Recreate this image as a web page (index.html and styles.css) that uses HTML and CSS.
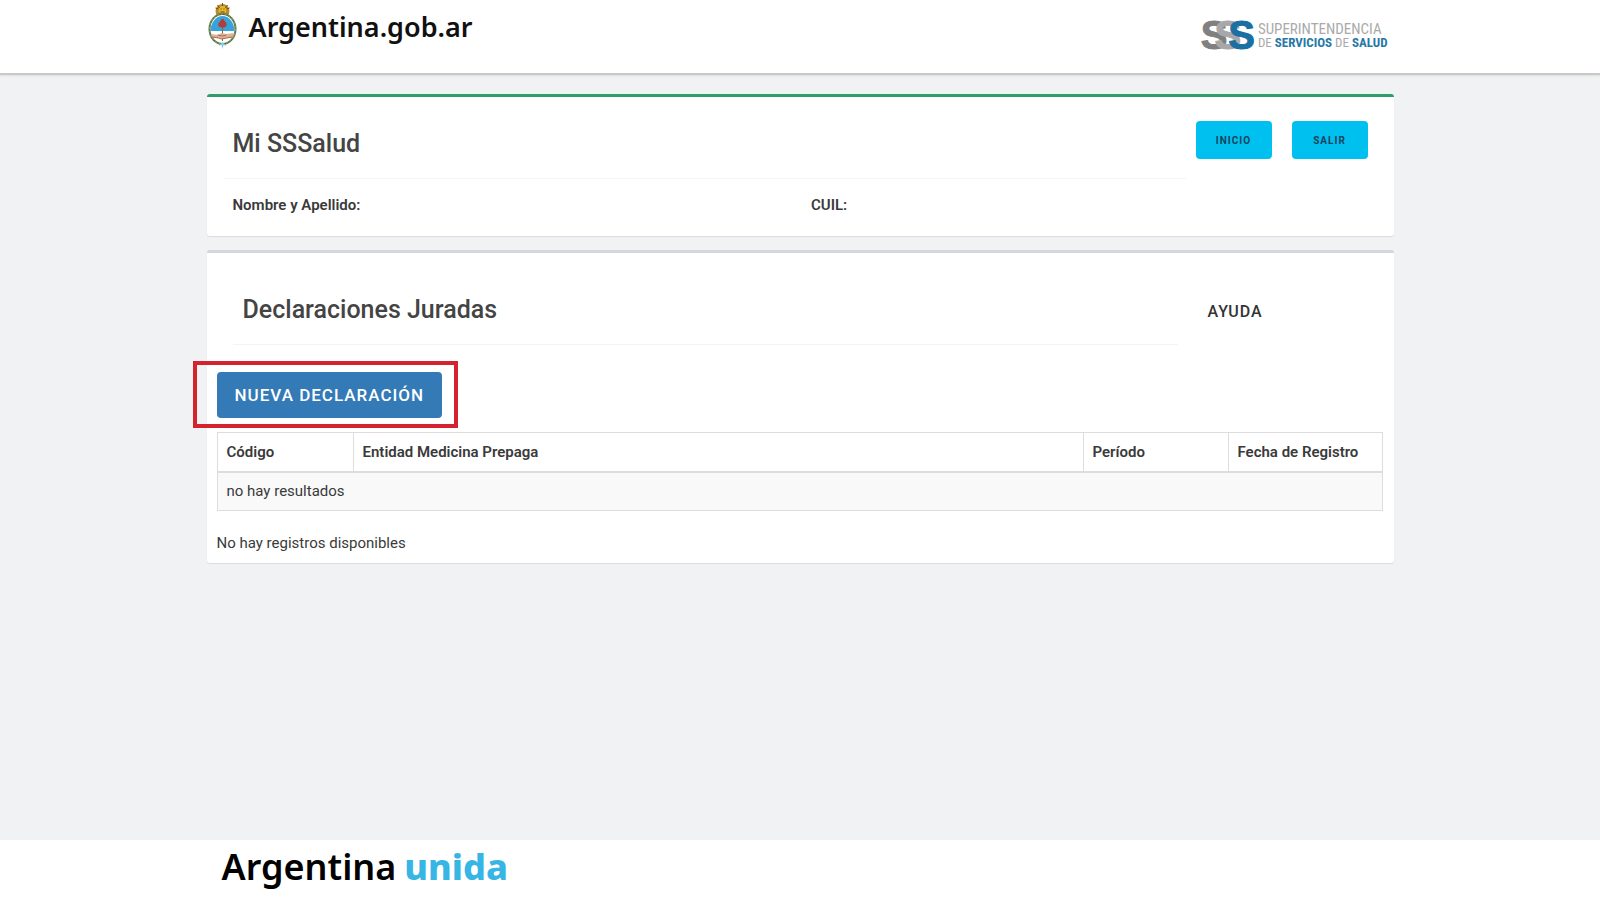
FILE: index.html
```html
<!DOCTYPE html>
<html lang="es">
<head>
<meta charset="utf-8">
<title>Mi SSSalud</title>
<link rel="stylesheet" href="styles.css">
</head>
<body>
<header class="header">
  <div class="container header-inner">
    <a class="brand" href="#">
      <svg class="crest" viewBox="0 0 30 46" aria-hidden="true">
        <circle cx="15" cy="8" r="7" fill="#b98a25"/>
        <circle cx="15" cy="7" r="4" fill="#e6b62f"/>
        <path d="M8 5l3 1M10 2l2 3M15 0v3M20 2l-2 3M22 5l-3 1" stroke="#66511f" stroke-width="1"/>
        <path d="M13 6h1M16 6h1M13 9h4" stroke="#6b4310" stroke-width="1"/>
        <ellipse cx="15" cy="26" rx="14" ry="16" fill="#54734a"/>
        <ellipse cx="15" cy="26" rx="13" ry="15" fill="none" stroke="#a89c5b" stroke-width="1" stroke-dasharray="2 2"/>
        <ellipse cx="15" cy="26" rx="12" ry="14" fill="#fff"/>
        <path d="M3 28a12 15 0 0 1 24 0z" fill="#36a4da"/>
        <path d="M15 22v16" stroke="#8b6542" stroke-width="1"/>
        <path d="M11 23c-1-4 2-4 3-7h2c1 3 4 3 3 7-2 2-6 2-8 0z" fill="#b53d39"/>
        <path d="M4 31l6 1 4-2 5 1 7-1v4l-6 1-5 1-5-1-6-1z" fill="#dfb195"/>
        <path d="M5 34l6 1 3 1 5-1 6-1M10 32l5 1 4-1" fill="none" stroke="#a76c50" stroke-width="1"/>
        <path d="M15 39l-4 4 3-1 1 4 1-4 3 1z" fill="#83cce8"/>
      </svg>
      <span class="brand-name">Argentina.gob.ar</span>
    </a>
    <div class="sss">
      <div class="sss-mark" aria-label="SSS"><span class="s-one">S</span><span class="s-two">S</span><span class="s-three">S</span></div>
      <div class="sss-text">
        <span class="sss-line">SUPERINTENDENCIA</span>
        <span class="sss-line sss-small">DE <b>SERVICIOS</b> DE <b>SALUD</b></span>
      </div>
    </div>
  </div>
</header>
<main class="container main">
  <section class="card card-user">
    <div class="card-head user-head">
      <h1 class="title title-user">Mi SSSalud</h1>
      <nav class="actions">
        <button class="btn btn-info" type="button">INICIO</button>
        <button class="btn btn-info" type="button">SALIR</button>
      </nav>
    </div>
    <div class="user-data">
      <strong>Nombre y Apellido:</strong>
      <strong>CUIL:</strong>
    </div>
  </section>
  <section class="card card-list">
    <div class="card-head list-head">
      <h2 class="title title-list">Declaraciones Juradas</h2>
      <a class="help" href="#">AYUDA</a>
    </div>
    <div class="highlight">
      <button class="btn btn-primary" type="button">NUEVA DECLARACIÓN</button>
    </div>
    <table class="table">
      <thead>
        <tr><th class="col-code">Código</th><th>Entidad Medicina Prepaga</th><th class="col-period">Período</th><th class="col-date">Fecha de Registro</th></tr>
      </thead>
      <tbody>
        <tr><td colspan="4">no hay resultados</td></tr>
      </tbody>
    </table>
    <p class="summary">No hay registros disponibles</p>
  </section>
</main>
<footer class="footer">
  <div class="container footer-inner">
    <span>Argentina</span><span class="unida">unida</span>
  </div>
</footer>
</body>
</html>
```
FILE: styles.css
```css
* { box-sizing: border-box; }
body {
  margin: 0;
  min-height: 100vh;
  display: flex;
  flex-direction: column;
  background: #f0f2f4;
  color: #3a3a3a;
  font: 15px/20px Roboto, sans-serif;
}
strong { font-weight: 600; }
.container {
  width: calc(100% - 32px);
  max-width: 1187px;
  margin: 0 auto;
}
.header {
  background: #fff;
  border-bottom: 2px solid #c8c8c9;
  box-shadow: 0 1px 2px #ddd;
}
.header-inner {
  display: flex;
  justify-content: space-between;
  height: 73px;
}
.brand {
  display: flex;
  align-items: flex-start;
  gap: 11px;
  padding-top: 3px;
  color: #111;
  text-decoration: none;
}
.crest { width: 31px; height: 46px; }
.brand-name {
  font: 600 27px/47px "Noto Sans", sans-serif;
}
.sss {
  display: flex;
  align-items: flex-start;
  gap: 3px;
  padding: 20px 6px 0 0;
}
.sss-mark {
  display: flex;
  font: bold 40px/30px "Liberation Sans", Arial, sans-serif;
  -webkit-text-stroke: 1px currentColor;
}
.s-one { color: #808080; }
.s-two { color: #a8a8a8; margin-left: -13px; }
.s-three { color: #1b6fa3; margin-left: -13px; }
.sss-text {
  display: flex;
  flex-direction: column;
  padding-top: 3px;
  color: #aaa;
  font: 15px/13px "Liberation Sans Narrow", "Roboto Condensed", Roboto, sans-serif;
}
.sss-small { font-size: 13px; }
.sss-small b { color: #2678a6; }
.main {
  flex: 1;
  display: flex;
  flex-direction: column;
  align-items: stretch;
  gap: 14px;
  padding: 19px 0 24px;
}
.card {
  background: #fff;
  border-top: 3px solid #d2d6de;
  border-radius: 3px;
  box-shadow: 0 1px 1px #d9dbde;
}
.card-user {
  border-top-color: #2f9d6b;
  padding: 24px 4px 21px 16px;
}
.card-list { padding: 24px 11px 10px 10px; }
.card-head { display: flex; align-items: flex-start; }
.user-head { padding-right: 22px; }
.title {
  flex: 1;
  margin: 0;
  padding: 0 10px 11px;
  border-bottom: 1px solid #f4f4f4;
  color: #444;
  font-size: 25px;
  font-weight: 500;
  line-height: 46px;
}
.actions { display: flex; gap: 20px; padding-left: 10px; }
.btn {
  border: 0;
  border-radius: 4px;
  font-family: inherit;
  font-weight: 500;
  letter-spacing: 1px;
}
.btn-info {
  width: 76px;
  height: 38px;
  background: #00c0ef;
  color: #17445a;
  font-size: 10px;
  font-weight: 700;
}
.user-data {
  display: grid;
  grid-template-columns: 1fr 1fr;
  padding: 16px 0 0 10px;
}
.list-head { padding: 10px 0 0 16px; }
.help {
  width: 205px;
  padding-left: 30px;
  color: #333;
  font-size: 16px;
  font-weight: 500;
  line-height: 50px;
  letter-spacing: 1px;
  text-decoration: none;
}
.highlight {
  width: fit-content;
  margin: 16px 0 4px -24px;
  padding: 7px 12px 6px 20px;
  border: 4px solid #d4232f;
}
.btn-primary {
  display: block;
  height: 46px;
  padding: 0 18px;
  background: #337ab7;
  color: #fff;
  font-size: 17px;
}
.table {
  width: 100%;
  border: 1px solid #ddd;
  border-collapse: collapse;
}
.table th, .table td {
  height: 39px;
  padding: 8px 9px;
  border: 1px solid #ddd;
  text-align: left;
}
.table th { font-weight: 600; border-bottom-width: 2px; }
.table td { background: #f9f9f9; }
.col-code { width: 136px; }
.col-period { width: 145px; }
.col-date { width: 154px; }
.summary { margin: 22px 0 0; }
.footer { background: #fff; }
.footer-inner {
  display: flex;
  gap: 8px;
  height: 60px;
  padding-left: 15px;
  color: #000;
  font: 600 36px/54px "Noto Sans", sans-serif;
}
.unida { color: #37b5e5; font-weight: 800; }
```
